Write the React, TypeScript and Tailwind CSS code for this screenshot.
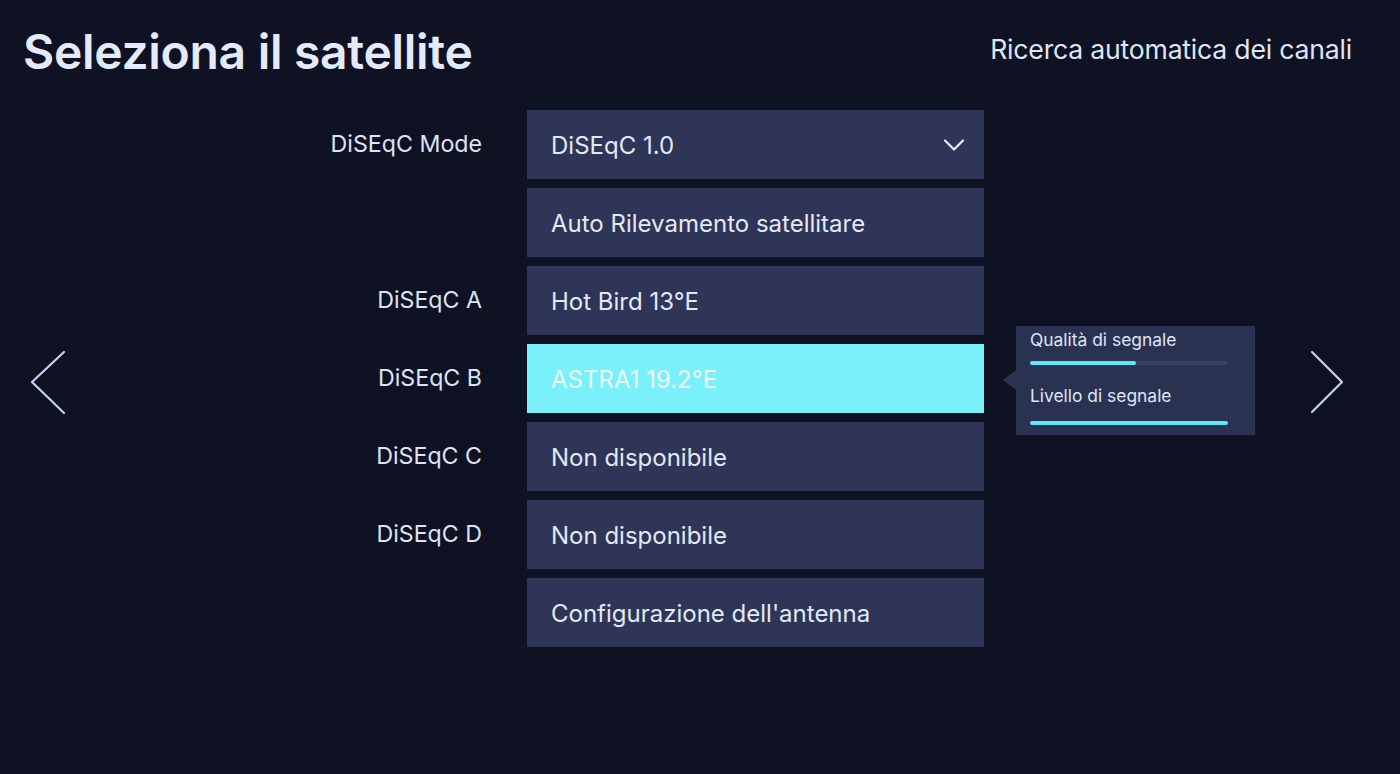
import { ChevronDown } from 'lucide-react';

const rows = [
  { label: 'DiSEqC Mode', value: 'DiSEqC 1.0', dropdown: true },
  { label: '', value: 'Auto Rilevamento satellitare' },
  { label: 'DiSEqC A', value: 'Hot Bird 13°E' },
  { label: 'DiSEqC B', value: 'ASTRA1 19.2°E', active: true },
  { label: 'DiSEqC C', value: 'Non disponibile' },
  { label: 'DiSEqC D', value: 'Non disponibile' },
  { label: '', value: "Configurazione dell'antenna" },
];

function SignalPopup() {
  return (
    <div className="absolute left-[489px] top-[-18px] w-[239px] h-[109px] bg-[#2a3251] px-[14px] pt-[3px]">
      <span className="absolute left-[-13px] top-[44px] w-0 h-0 border-y-[10px] border-y-transparent border-r-[13px] border-r-[#2a3251]" />
      <div className="text-[17.4px] leading-[22px] text-[#dfe5f6]">Qualità di segnale</div>
      <div className="mt-[10px] w-[197px] h-[4px] bg-[#3a4264] rounded-full">
        <div className="h-full bg-[#5fe6f4] rounded-full" style={{ width: '54%' }} />
      </div>
      <div className="mt-[20px] text-[17.4px] leading-[22px] text-[#dfe5f6]">Livello di segnale</div>
      <div className="mt-[14px] w-[198px] h-[4px] bg-[#5fe6f4] rounded-full" />
    </div>
  );
}

export default function App() {
  return (
    <div
      className="w-[1400px] h-[774px] bg-[#0f1222] text-[#dfe5f6] overflow-hidden"
      style={{ fontFamily: 'Inter, "Noto Sans", sans-serif' }}
    >
      {/* header */}
      <div className="h-[110px] flex items-start justify-between pl-[23px] pr-[48px]">
        <h1 className="mt-[24px] text-[48px] leading-[56px] font-semibold tracking-[-0.3px] text-[#e4eafb]">
          Seleziona il satellite
        </h1>
        <div className="mt-[31px] text-[26.6px] leading-[36px] text-[#dfe5f6] tracking-[-0.2px]">
          Ricerca automatica dei canali
        </div>
      </div>

      <div className="flex items-start">
        <div className="w-[100px]">
          <svg width="40" height="66" className="ml-[28px] mt-[239px]" fill="none" stroke="#c9d1f2" strokeWidth="2.2" strokeLinecap="round" strokeLinejoin="round">
            <path d="M36 3 L4 33 L36 64" />
          </svg>
        </div>

        <div className="flex flex-col gap-[9px]">
          {rows.map((r, i) => (
            <div key={i} className="flex items-center gap-[45px]">
              <div className="w-[382px] text-right text-[23.2px] text-[#dce3f6]">{r.label}</div>
              <div
                className={
                  'relative w-[457px] h-[69px] flex items-center justify-between pl-[24px] pr-[12px] text-[24px] ' +
                  (r.active ? 'bg-[#79f0fa] text-[#eefbfd]' : 'bg-[#2e3556] text-[#e3e8f7]')
                }
              >
                <span className="mt-[2px]">{r.value}</span>
                {r.dropdown && <ChevronDown size={36} strokeWidth={1.5} className="text-[#e3e8f7]" />}
                {r.active && <SignalPopup />}
              </div>
            </div>
          ))}
        </div>

        <div className="flex-1 flex justify-end pr-[52px]">
          <svg width="40" height="66" className="mt-[239px]" fill="none" stroke="#c9d1f2" strokeWidth="2.2" strokeLinecap="round" strokeLinejoin="round">
            <path d="M4 3 L34 33 L4 63" />
          </svg>
        </div>
      </div>
    </div>
  );
}
